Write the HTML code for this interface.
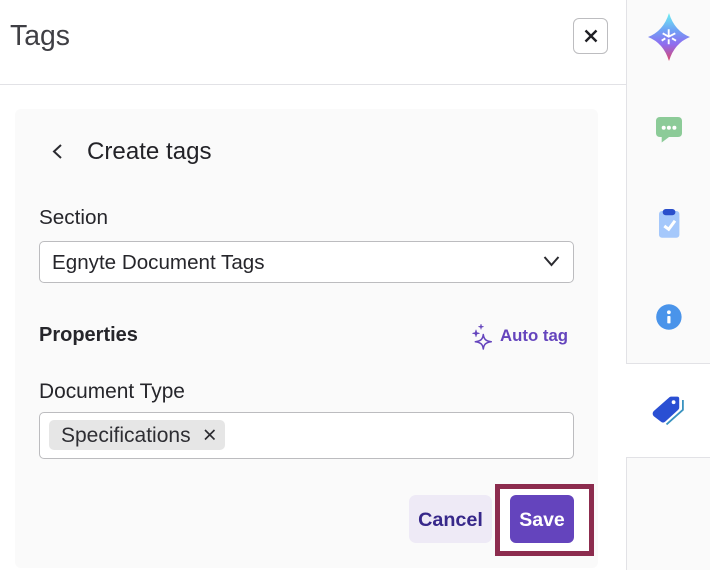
<!DOCTYPE html>
<html><head><meta charset="utf-8">
<style>
html,body{margin:0;padding:0;background:#fff}
#r{position:relative;width:710px;height:570px;overflow:hidden;background:#fff;font-family:"Liberation Sans",sans-serif;color:#2b2b30}
#r div{position:absolute;white-space:nowrap;box-sizing:border-box}
#r svg{position:absolute;overflow:visible}
</style></head><body>
<div id="r">
<div style="left:0;top:84px;width:626px;height:1px;background:#e2e2e6"></div>
<div style="left:10px;top:19px;font-size:28.4px;line-height:34px;color:#3f3f44">Tags</div>
<div style="left:573px;top:18px;width:35px;height:36px;border:1px solid #bdbdc0;border-radius:6px;background:#fff"></div>
<svg style="left:573px;top:18px" width="35" height="36"><path d="M12.5 12.5L23.5 23.5M23.5 12.5L12.5 23.5" stroke="#1f1f24" stroke-width="2.4" fill="none"/></svg>

<div style="left:15px;top:109px;width:583px;height:459px;background:#fafafa;border-radius:6px"></div>
<svg style="left:50px;top:141px" width="16" height="20"><path d="M11 4L4 10.5L11 17" stroke="#2b2b30" stroke-width="2" fill="none"/></svg>
<div style="left:87px;top:138px;font-size:24.1px;line-height:28px;color:#222227">Create tags</div>

<div style="left:39px;top:206px;font-size:20.7px;line-height:24px;color:#26262b">Section</div>
<div style="left:39px;top:241px;width:535px;height:42px;border:1px solid #bcbcbf;border-radius:5px;background:#fff"></div>
<div style="left:52px;top:251px;font-size:20.6px;line-height:24px;color:#26262b">Egnyte Document Tags</div>
<svg style="left:543px;top:255px" width="18" height="12"><path d="M1.5 2L8.5 10L15.5 2" stroke="#2b2b30" stroke-width="2" fill="none"/></svg>

<div style="left:39px;top:323px;font-size:20px;line-height:24px;font-weight:bold;color:#26262b">Properties</div>
<svg style="left:471px;top:324px" width="24" height="26" fill="none" stroke="#6444bd" stroke-width="1.5" stroke-linejoin="round">
<path d="M12.3 10.5C12.9 15 14.5 17 20.3 17.7C14.5 18.4 12.9 20.5 12.3 25C11.7 20.5 10.1 18.4 4.3 17.7C10.1 17 11.7 15 12.3 10.5Z"/>
<path d="M5 5.8L5.8 8.5L8.5 9.3L5.8 10.1L5 12.8L4.2 10.1L1.5 9.3L4.2 8.5Z" fill="#6444bd" stroke-width=".6"/>
<path d="M10 0L10.6 2.1L12.7 2.7L10.6 3.3L10 5.4L9.4 3.3L7.3 2.7L9.4 2.1Z" fill="#6444bd" stroke-width=".5"/>
</svg>
<div style="left:500px;top:325px;font-size:16.8px;line-height:22px;font-weight:bold;color:#6444bd">Auto tag</div>

<div style="left:39px;top:380px;font-size:20.9px;line-height:24px;color:#26262b">Document Type</div>
<div style="left:39px;top:412px;width:535px;height:47px;border:1px solid #bcbcbf;border-radius:5px;background:#fff"></div>
<div style="left:49px;top:420px;width:176px;height:30px;background:#e6e6e6;border-radius:5px"></div>
<div style="left:61px;top:424px;font-size:21px;line-height:24px;color:#2e2e33">Specifications</div>
<svg style="left:203px;top:428px" width="14" height="14"><path d="M2 2L11.5 11.5M11.5 2L2 11.5" stroke="#2b2b30" stroke-width="1.6" fill="none"/></svg>

<div style="left:409px;top:495px;width:83px;height:48px;background:#eeeaf6;border-radius:7px"></div>
<div style="left:409px;top:508px;width:83px;text-align:center;font-size:19.8px;line-height:24px;font-weight:bold;color:#37288a">Cancel</div>
<div style="left:495px;top:484px;width:99px;height:72px;border:5px solid #8c2c4e;background:#fff"></div>
<div style="left:510px;top:495px;width:64px;height:48px;background:#6444bd;border-radius:6px"></div>
<div style="left:510px;top:508px;width:64px;text-align:center;font-size:19.5px;line-height:24px;font-weight:bold;color:#fff">Save</div>

<div style="left:626px;top:0;width:84px;height:364px;background:#fafafa;border-left:1px solid #e2e2e6;border-bottom:1px solid #e2e2e6"></div>
<div style="left:626px;top:457px;width:84px;height:113px;background:#fafafa;border-left:1px solid #e2e2e6;border-top:1px solid #e2e2e6"></div>

<svg style="left:648px;top:13px" width="42" height="49">
<defs><linearGradient id="g" x1="0" y1="0" x2="0" y2="1"><stop offset="0" stop-color="#6ef0f2"/><stop offset=".35" stop-color="#6fa4f5"/><stop offset=".65" stop-color="#8f6cf0"/><stop offset="1" stop-color="#d9486a"/></linearGradient></defs>
<path d="M21 0Q26.5 18 42 24Q26.5 30 21 48Q15.5 30 0 24Q15.5 18 21 0Z" fill="url(#g)"/>
<path d="M20.7 16.3V23.7M14.7 20.3L20.7 23.7L27.3 20.3M13.7 27.7L17.3 25.3M28 27.7L24 25.3M20.7 26.3V31.3" stroke="#fff" stroke-width="1.9" fill="none"/>
</svg>

<svg style="left:655px;top:117px" width="28" height="26">
<path d="M5 0H23C25.5 0 27 1.5 27 4V16C27 18.5 25.5 20 23 20H14L6.7 25.5V20H5C2.5 20 1 18.5 1 16V4C1 1.5 2.5 0 5 0Z" fill="#8ccb98"/>
<circle cx="8.7" cy="10.7" r="2" fill="#fff"/><circle cx="13.9" cy="10.7" r="2" fill="#fff"/><circle cx="19.4" cy="10.7" r="2" fill="#fff"/>
</svg>

<svg style="left:659px;top:209px" width="22" height="30">
<rect x="0" y="2" width="20.4" height="26.7" rx="3" fill="#a5c8fb"/>
<rect x="3.7" y="0" width="12.7" height="6.3" rx="3.1" fill="#2a4fcb"/>
<path d="M5.3 17L9.7 20.3L16 11.7" stroke="#fff" stroke-width="3" fill="none"/>
</svg>

<svg style="left:656px;top:304px" width="26" height="26">
<circle cx="12.9" cy="13" r="12.7" fill="#4a94ea"/>
<circle cx="12.9" cy="8.3" r="1.9" fill="#fff"/>
<rect x="11.3" y="12" width="3.2" height="7.4" rx=".8" fill="#fff"/>
</svg>

<svg style="left:652px;top:396px" width="32" height="30">
<path d="M30.9 4V13.8L14.5 28.4" stroke="#3a93c0" stroke-width="1.8" fill="none"/>
<path d="M17 1.6C17.8 .8 18.4 .6 19.5 .6H25.2C26.6 .6 27.2 1.4 27.2 2.6V11.5C27.2 12.5 26.8 13.2 26 14L13.5 25.4C11.9 26.9 10.4 26.9 8.8 25.6L1.8 20.2C.3 18.8.3 16.4 1.8 15Z" fill="#2a4fd3"/>
<circle cx="21.6" cy="6.2" r="1.9" fill="#fff"/>
</svg>
</div>
</body></html>
